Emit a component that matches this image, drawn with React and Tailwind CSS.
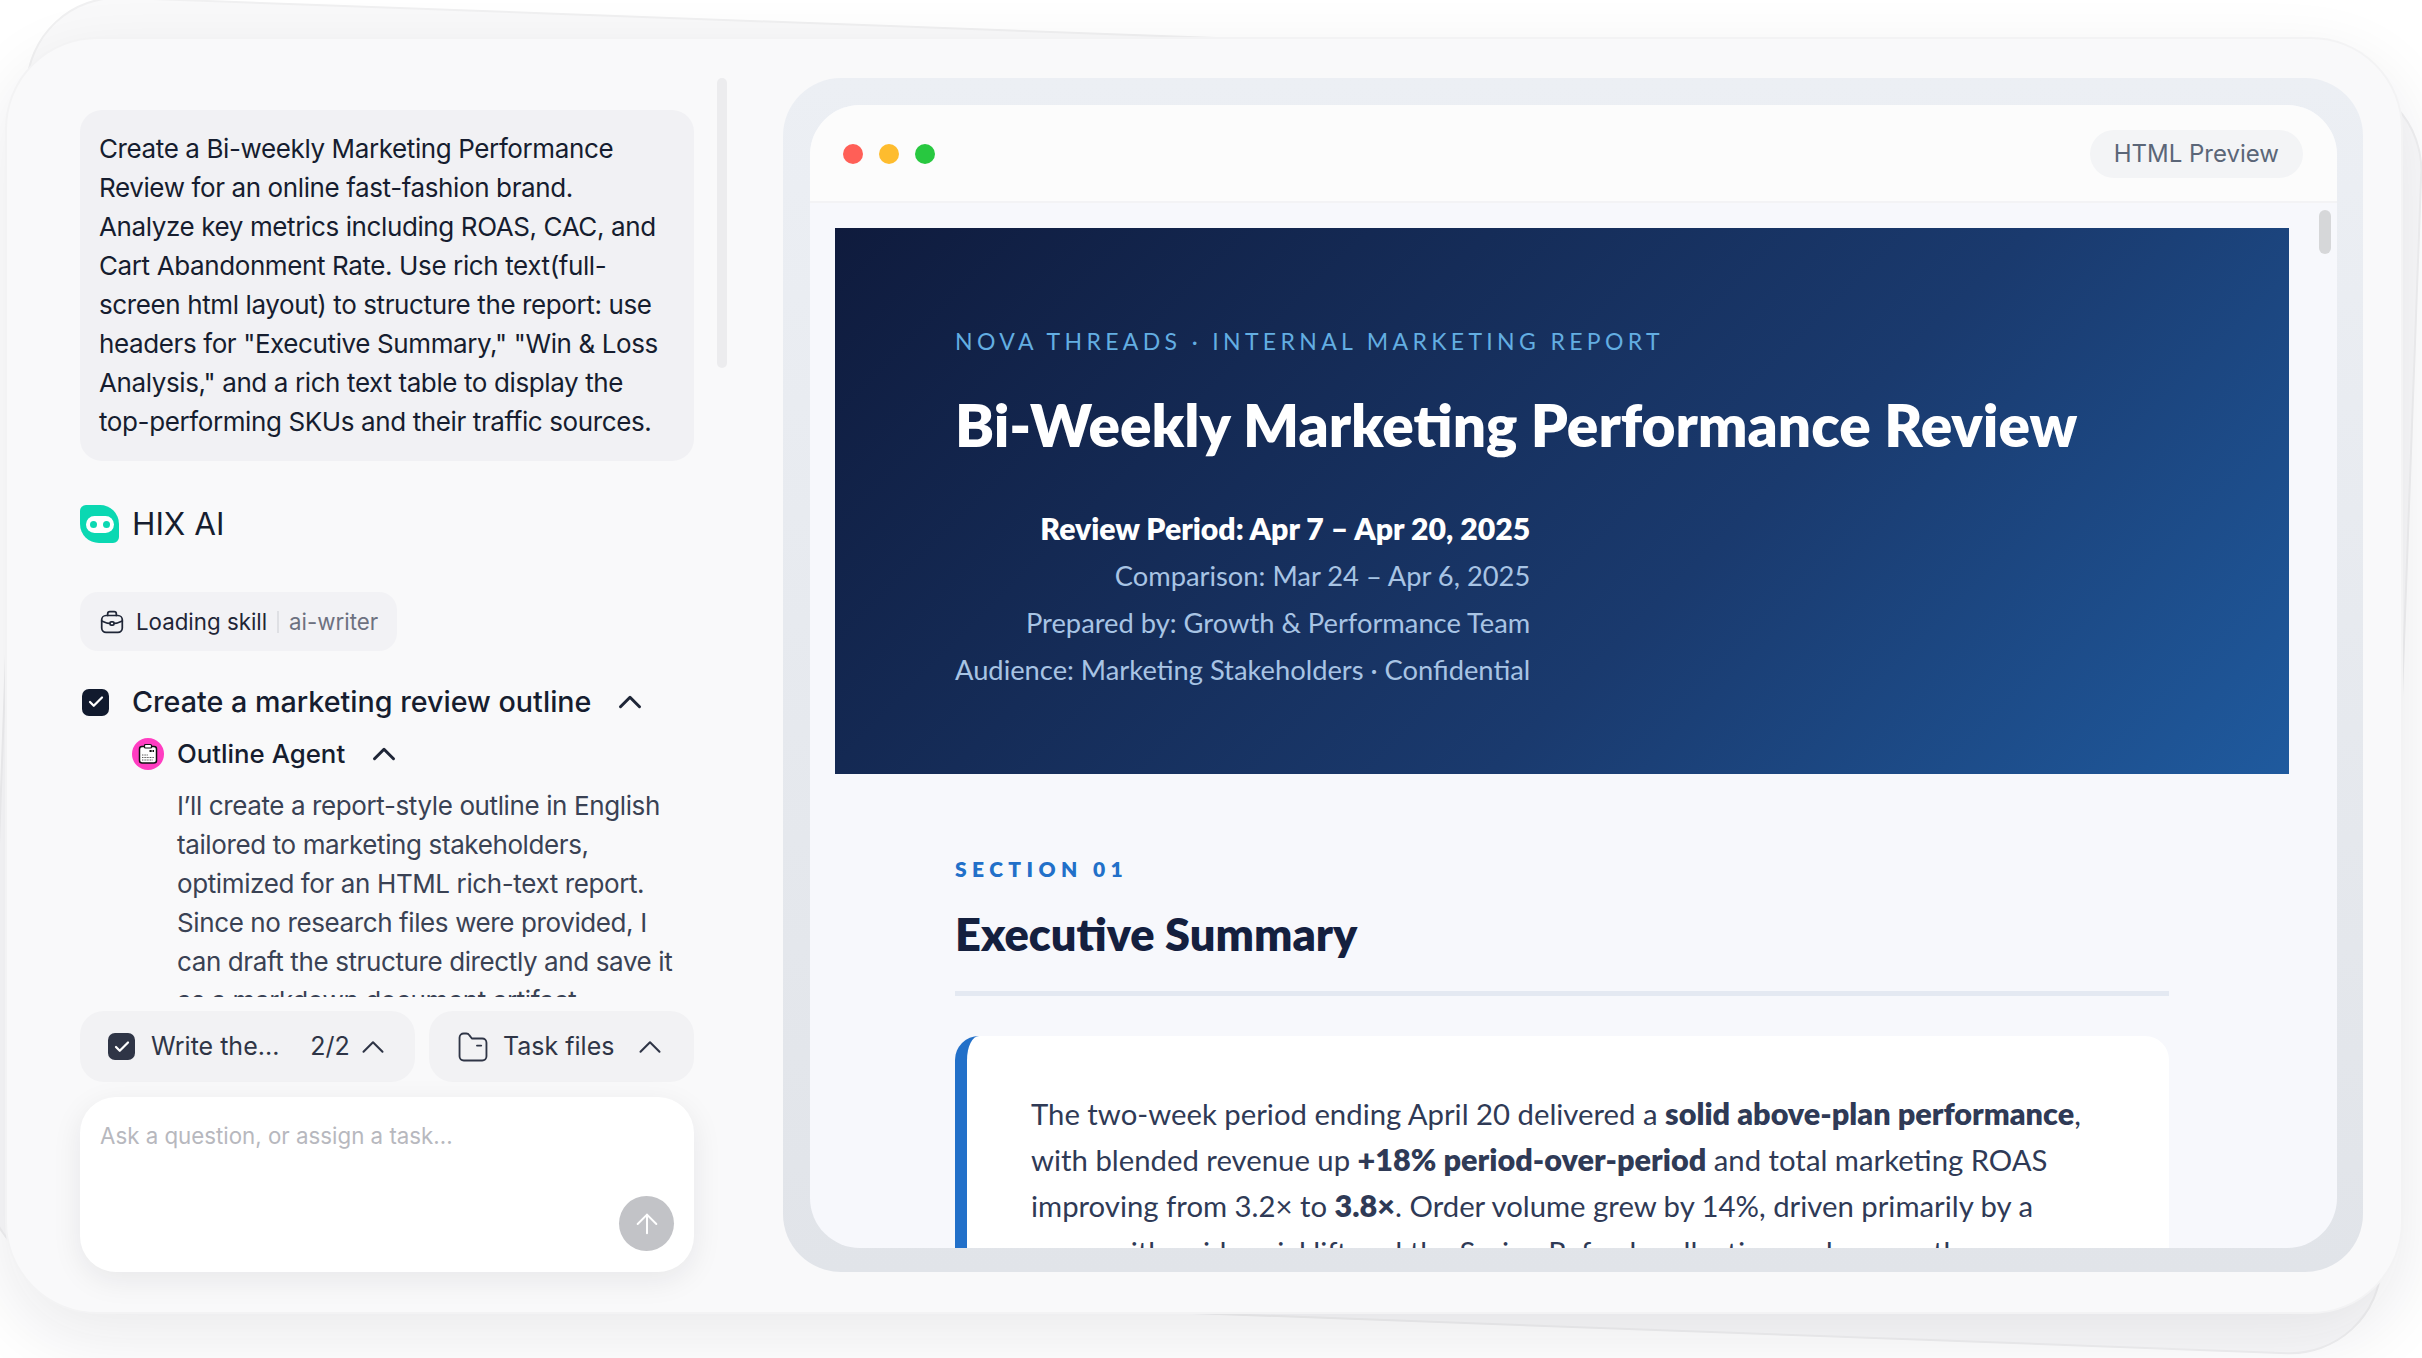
import React from 'react';
import { ChevronUp, ArrowUp, Check } from 'lucide-react';

const inter = { fontFamily: 'Inter, sans-serif' };

function CheckBox({ className }) {
  return (
    <span className={`flex h-[27px] w-[27px] shrink-0 items-center justify-center rounded-[7px] ${className}`}>
      <Check size={18} strokeWidth={3} color="#fff" />
    </span>
  );
}

function Logo() {
  return (
    <span className="flex h-[38px] w-[39px] shrink-0 items-center justify-center rounded-tl-[6px] rounded-tr-[19px] rounded-br-[6px] rounded-bl-[19px] bg-[#0bd8b2]">
      <span className="flex h-[17px] w-[28px] items-center justify-center gap-[6px] rounded-full bg-white">
        <span className="h-[7px] w-[7px] rounded-full bg-[#0bd8b2]" />
        <span className="h-[7px] w-[7px] rounded-full bg-[#0bd8b2]" />
      </span>
    </span>
  );
}

function BriefcaseIcon() {
  return (
    <svg width="26" height="26" viewBox="0 0 24 24" fill="none" stroke="#1f2637" strokeWidth="1.6" strokeLinecap="round" strokeLinejoin="round">
      <path d="M8 6V4.500C8 3.400 8.900 2.500 10 2.500h4c1.100 0 2 .9 2 2V6" />
      <rect x="2.500" y="6" width="19" height="15.500" rx="4" />
      <path d="M2.500 11c3 1.600 6 2.400 9.500 2.400s6.500-.8 9.500-2.400" />
      <rect x="10.200" y="11.800" width="3.600" height="3" rx="1" fill="#fff" />
    </svg>
  );
}

function FolderIcon() {
  return (
    <svg width="34" height="34" viewBox="0 0 24 24" fill="none" stroke="#2f3546" strokeWidth="1.300" strokeLinecap="round" strokeLinejoin="round">
      <path d="M2.500 5.500c0-1.700 1.300-3 3-3h1.700c1 0 1.800.5 2.300 1.300L11.200 6H18.500c1.700 0 3 1.300 3 3V18.500c0 1.700-1.300 3-3 3h-13c-1.700 0-3-1.300-3-3V5.500z" />
      <path d="M14.800 11h3" />
    </svg>
  );
}

function AgentIcon() {
  return (
    <span className="flex h-[32px] w-[32px] shrink-0 items-center justify-center rounded-full bg-[#ff3dc1]">
      <svg width="22" height="22" viewBox="0 0 22 22" fill="none">
        <rect x="2.500" y="3.500" width="17" height="16.500" rx="2.500" fill="#fff" stroke="#111" strokeWidth="1.500" />
        <rect x="7.500" y="1.500" width="7" height="3.500" rx="1" fill="#fff" stroke="#111" strokeWidth="1.200" />
        <path d="M12.500 8h2.200M15.500 8h1.500" stroke="#111" strokeWidth="1.800" />
        <path d="M5 12h6M5 14.500h12M5 17h11" stroke="#555" strokeWidth="1" strokeDasharray="1 .6" />
      </svg>
    </span>
  );
}

function TaskColumn() {
  return (
    <div className="relative flex w-[614px] shrink-0 flex-col pt-[71px] pb-[40px]" style={inter}>
      <div className="flex-1 overflow-hidden">
        <div className="rounded-[22px] bg-[#f1f1f4] pt-[19px] pr-[19px] pb-[20px] pl-[19px] text-[26px] leading-[39px] tracking-[-0.015em] text-[#161d2f]">
          Create a Bi-weekly Marketing Performance Review for an online fast-fashion brand. Analyze key metrics including ROAS, CAC, and Cart Abandonment Rate. Use rich text(full-screen html layout) to structure the report: use headers for "Executive Summary," "Win &amp; Loss Analysis," and a rich text table to display the top-performing SKUs and their traffic sources.
        </div>

        <div className="mt-[44px] flex items-center gap-[13px]">
          <Logo />
          <span className="text-[31.500px] leading-[38px] text-[#161d2f]">HIX AI</span>
        </div>

        <div className="mt-[49px] inline-flex h-[59px] items-center rounded-[18px] bg-[#f2f2f5] pl-[19px] pr-[19px] text-[22.300px]">
          <BriefcaseIcon />
          <span className="ml-[11px] text-[#1f2637]">Loading skill</span>
          <span className="mx-[10px] h-[22px] w-[2px] bg-[#dfe0e4]" />
          <span className="text-[#6d7180]">ai-writer</span>
        </div>

        <div className="mt-[31px] flex h-[40px] items-center">
          <CheckBox className="ml-[2px] bg-[#111a2e]" />
          <span className="ml-[23px] text-[28.700px] leading-[40px] font-medium text-[#161d2f]">Create a marketing review outline</span>
          <ChevronUp size={38} strokeWidth={1.900} className="ml-[20px] text-[#1f2637]" />
        </div>

        <div className="mt-[14px] ml-[52px] flex h-[36px] items-center">
          <AgentIcon />
          <span className="ml-[13px] text-[25.800px] leading-[36px] font-medium text-[#161d2f]">Outline Agent</span>
          <ChevronUp size={38} strokeWidth={1.900} className="ml-[20px] text-[#1f2637]" />
        </div>

        <p className="mt-[14px] ml-[97px] text-[26px] leading-[39px] tracking-[-0.015em] text-[#3a4254]">
          I’ll create a report-style outline in English tailored to marketing stakeholders, optimized for an HTML rich-text report. Since no research files were provided, I can draft the structure directly and save it as a markdown document artifact.
        </p>
      </div>

      <div className="mt-[14px] flex gap-[14px]">
        <div className="flex h-[71px] w-[335px] items-center rounded-[24px] bg-[#f2f2f4] pl-[28px] text-[25px] text-[#2f3546]">
          <CheckBox className="bg-[#2f3546]" />
          <span className="ml-[16px]">Write the...</span>
          <span className="ml-[31px]">2/2</span>
          <ChevronUp size={38} strokeWidth={1.300} className="ml-[4px]" />
        </div>
        <div className="flex h-[71px] flex-1 items-center rounded-[24px] bg-[#f2f2f4] pl-[27px] text-[25px] text-[#2f3546]">
          <FolderIcon />
          <span className="ml-[13px]">Task files</span>
          <ChevronUp size={38} strokeWidth={1.300} className="ml-[17px]" />
        </div>
      </div>

      <div className="mt-[15px] flex h-[175px] flex-col justify-between rounded-[36px] bg-white pt-[25px] pr-[20px] pb-[21px] pl-[20px] shadow-[0_8px_30px_rgba(20,25,40,0.08)]">
        <span className="text-[22.300px] leading-[28px] text-[#b7b8be]">Ask a question, or assign a task...</span>
        <span className="flex h-[55px] w-[55px] items-center justify-center self-end rounded-full bg-[#c2c3c7]">
          <ArrowUp size={32} strokeWidth={1.500} color="#fff" />
        </span>
      </div>

      <span className="absolute top-[39px] left-[637px] h-[290px] w-[10px] rounded-full bg-[#ececee]" />
    </div>
  );
}

function Hero() {
  return (
    <div className="bg-[linear-gradient(135deg,#0f1b3d_0%,#1a3a6e_60%,#1f5a9e_100%)] pt-[100px] pb-[81px] pl-[120px] text-white">
      <div className="text-[23px] leading-[26px] tracking-[4.350px] text-[#63aee2]">NOVA THREADS · INTERNAL MARKETING REPORT</div>
      <h1 className="mt-[35px] text-[58.500px] leading-[70px] font-extrabold">Bi-Weekly Marketing Performance Review</h1>
      <div className="mt-[46px] inline-block text-right text-[27.300px] leading-[47px] text-[#a8c4e4]">
        <div className="text-[30.200px] font-extrabold text-white">Review Period: Apr 7 – Apr 20, 2025</div>
        <div>Comparison: Mar 24 – Apr 6, 2025</div>
        <div>Prepared by: Growth &amp; Performance Team</div>
        <div>Audience: Marketing Stakeholders · Confidential</div>
      </div>
    </div>
  );
}

function Summary() {
  return (
    <div className="px-[120px] pt-[82px]">
      <div className="text-[21px] leading-[26px] font-extrabold tracking-[5.400px] text-[#2270c9]">SECTION 01</div>
      <h2 className="mt-[26px] text-[45.200px] leading-[52px] font-extrabold text-[#14203f]">Executive Summary</h2>
      <div className="mt-[31px] border-t-[5px] border-[#e4e9f2]" />
      <div className="mt-[40px] rounded-[24px] border-l-[12px] border-[#2270c9] bg-white pt-[55px] pr-[77px] pb-[40px] pl-[64px] text-[29.300px] leading-[46px] text-[#2f3a56]">
        The two-week period ending April 20 delivered a <strong className="text-[30.600px] font-extrabold">solid above-plan performance</strong>, with blended revenue up <strong className="text-[30.600px] font-extrabold">+18% period-over-period</strong> and total marketing ROAS improving from 3.2× to <strong className="text-[30.600px] font-extrabold">3.8×</strong>. Order volume grew by 14%, driven primarily by a surge with paid social lift and the Spring Refresh collection and some other channels across the full paid media mix this period.
      </div>
    </div>
  );
}

function PreviewPanel() {
  return (
    <div className="mt-[39px] mr-[38px] mb-[40px] flex-1 rounded-[58px] bg-[linear-gradient(180deg,#eceff4,#e1e4e9)] pt-[27px] pr-[26px] pb-[24px] pl-[27px]">
      <div className="relative flex h-full flex-col overflow-hidden rounded-[50px] bg-[#f7f8fc]">
        <div className="flex h-[98px] shrink-0 items-center justify-between border-b-2 border-[#f3f3f5] bg-[#fcfcfc] pt-[2px] pr-[34px] pl-[33px]">
          <div className="flex gap-[16px]">
            <span className="h-[20px] w-[20px] rounded-full bg-[#ff5f57]" />
            <span className="h-[20px] w-[20px] rounded-full bg-[#febc2e]" />
            <span className="h-[20px] w-[20px] rounded-full bg-[#28c840]" />
          </div>
          <span className="flex h-[48px] items-center rounded-full bg-[#f3f4f6] px-[24px] text-[24px] text-[#5b6678]" style={inter}>HTML Preview</span>
        </div>
        <div className="flex-1 overflow-hidden pt-[25px] pr-[48px] pl-[25px]" style={{ fontFamily: 'Lato, sans-serif' }}>
          <Hero />
          <Summary />
        </div>
        <span className="absolute top-[105px] right-[6px] h-[44px] w-[12px] rounded-full bg-[#d6d7d9]" />
      </div>
    </div>
  );
}

export default function App() {
  return (
    <div className="relative h-[1358px] w-[2422px] overflow-hidden bg-white pt-[37px] pl-[5px]">
      {/* tilted sheet behind the main card */}
      <div className="absolute top-[37px] left-[5px] h-[1277px] w-[2398px] rotate-[2.1deg] rounded-[92px] border-2 border-[#f0f0f1] bg-[#f9f9fa]" />
      <div className="relative flex h-[1277px] w-[2398px] gap-[89px] rounded-[92px] border-2 border-[#f3f3f4] bg-[#f9f9fa] pl-[73px] shadow-[0_24px_70px_rgba(20,25,40,0.09)]">
        <TaskColumn />
        <PreviewPanel />
      </div>
    </div>
  );
}
